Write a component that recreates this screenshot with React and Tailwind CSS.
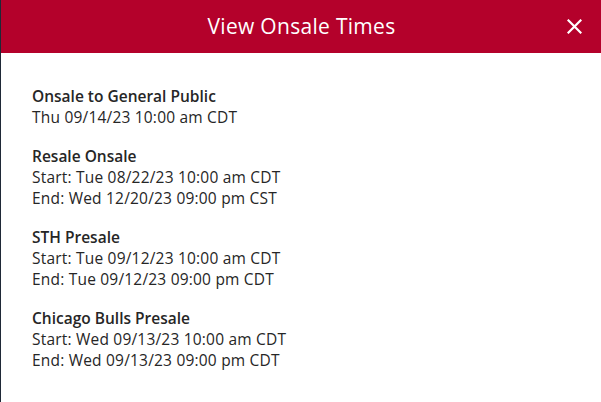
import React from "react";

const sections = [
    { title: "Onsale to General Public", lines: ["Thu 09/14/23 10:00 am CDT"] },
    { title: "Resale Onsale", lines: ["Start: Tue 08/22/23 10:00 am CDT", "End: Wed 12/20/23 09:00 pm CST"] },
    { title: "STH Presale", lines: ["Start: Tue 09/12/23 10:00 am CDT", "End: Tue 09/12/23 09:00 pm CDT"] },
    { title: "Chicago Bulls Presale", lines: ["Start: Wed 09/13/23 10:00 am CDT", "End: Wed 09/13/23 09:00 pm CDT"] },
];

export default function App() {
    return (
        <div className="w-[601px] h-[402px] bg-white border-l border-[#1f2937] font-['Open_Sans',sans-serif] overflow-hidden">
            {/* header */}
            <header className="h-[53px] bg-[#b4012b] text-white flex items-center justify-center relative">
                <h1 className="text-[21px] tracking-[0.3px] pl-[1px]">View Onsale Times</h1>
                <button className="absolute right-[19px] top-[19px] w-[15px] h-[15px]">
                    <svg viewBox="0 0 15 15" width="15" height="15" stroke="white" strokeWidth="2.2" strokeLinecap="square">
                        <path d="M1.5 1.5 L13.5 13.5 M13.5 1.5 L1.5 13.5" />
                    </svg>
                </button>
            </header>

            <div className="pl-[31px] pt-[33px] text-[15.5px] leading-[21px] tracking-[0.2px] text-[#262626] flex flex-col gap-[18px]">
                {sections.map((s) => (
                    <div key={s.title}>
                        <p className="font-semibold text-[15.5px] tracking-normal">{s.title}</p>
                        {s.lines.map((l) => (
                            <p key={l}>{l}</p>
                        ))}
                    </div>
                ))}
            </div>
        </div>
    );
}
